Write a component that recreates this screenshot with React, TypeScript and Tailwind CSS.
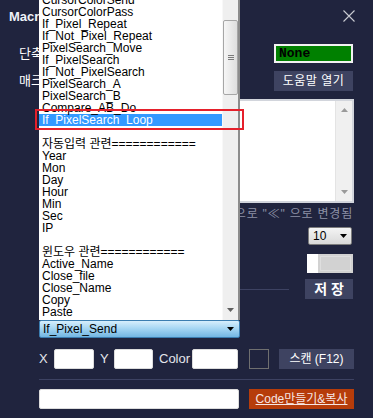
const rows: string[] = [
  'CursorColorSend',
  'CursorColorPass',
  'If_Pixel_Repeat',
  'If_Not_Pixel_Repeat',
  'PixelSearch_Move',
  'If_PixelSearch',
  'If_Not_PixelSearch',
  'PixelSearch_A',
  'PixelSearch_B',
  'Compare_AB_Do',
  'If_PixelSearch_Loop',
  '',
  '자동입력 관련============',
  'Year',
  'Mon',
  'Day',
  'Hour',
  'Min',
  'Sec',
  'IP',
  '',
  '윈도우 관련============',
  'Active_Name',
  'Close_file',
  'Close_Name',
  'Copy',
  'Paste',
]

const selected = 'If_PixelSearch_Loop'

function Tri({ up = false, color = '#000' }: { up?: boolean; color?: string }) {
  return (
    <svg width="7" height="4" viewBox="0 0 7 4">
      <path d={up ? 'M0 4L3.5 0L7 4Z' : 'M0 0L7 0L3.5 4Z'} fill={color} />
    </svg>
  )
}

function DropList() {
  return (
    <div className="absolute left-[39px] top-0 w-[201px] h-[320px] bg-white border-r-2 border-[#8c8c8c] flex overflow-hidden">
      <div className="flex-1 overflow-hidden">
        <div className="-mt-[6px]">
          {rows.map((r, i) => (
            <div
              key={i}
              className={
                'h-[12px] leading-[12px] text-[12px] pl-[3px] whitespace-nowrap ' +
                (r === selected ? 'bg-[#3399ff] text-white' : 'text-black')
              }
            >
              {r}
            </div>
          ))}
        </div>
      </div>
      <div className="w-[16px] bg-[#efefef] border-l border-[#f8f8f8] flex flex-col items-center">
        <div className="mt-[20px] w-[15px] h-[75px] rounded-[2px] border border-[#a6a6a6] bg-gradient-to-r from-[#f6f6f6] to-[#dedede] flex flex-col items-center justify-center gap-[1px]">
          <div className="w-[6px] h-px bg-[#7a7a7a]" />
          <div className="w-[6px] h-px bg-[#7a7a7a]" />
          <div className="w-[6px] h-px bg-[#7a7a7a]" />
        </div>
        <div className="mt-auto mb-[8px]">
          <Tri color="#606060" />
        </div>
      </div>
    </div>
  )
}

export default function App() {
  return (
    <div className="relative w-[373px] h-[418px] overflow-hidden bg-[#20243e] font-['Liberation_Sans','Noto_Sans_CJK_KR',sans-serif] text-white">
      <div className="flex flex-col">
        <div className="h-[44px] flex items-start justify-between">
          <div className="ml-[9px] mt-[10px] text-[13px] leading-[14px] font-bold text-[#eef1f8]">Macro 설정</div>
          <svg className="mt-[10px] mr-[18px]" width="12" height="12" viewBox="0 0 12 12">
            <path d="M0.5 0.5L11.5 11.5M11.5 0.5L0.5 11.5" stroke="#c9cbd2" strokeWidth="1.1" />
          </svg>
        </div>

        <div className="h-[19px] flex items-center justify-between pl-[19px] pr-[20px]">
          <span className="text-[13px] leading-[14px]">단축키</span>
          <div className="w-[79px] h-[19px] bg-[#008000] border-2 border-[#f2f2f2] flex items-center pl-[3px]">
            <span className="font-['Liberation_Mono',monospace] font-bold text-[13px] leading-[14px] text-black">None</span>
          </div>
        </div>

        <div className="mt-[8px] h-[20px] flex items-center justify-between pl-[19px] pr-[20px]">
          <span className="text-[13px] leading-[14px]">매크로 이름</span>
          <button className="w-[79px] h-[20px] bg-[#3e4361] text-[12px] text-white flex items-center justify-center tracking-[0.5px]">
            도움말 열기
          </button>
        </div>

        <div className="mt-[8px] ml-[39px] mr-[19px] h-[104px] bg-white border-2 border-[#d2d5dc] flex justify-end">
          <div className="w-[17px] bg-[#f0f0f0] border-l border-[#e4e4e4] flex flex-col items-center justify-between py-[7px]">
            <Tri up color="#9a9a9a" />
            <Tri color="#9a9a9a" />
          </div>
        </div>

        <div className="mt-[4px] pr-[20px] text-right text-[12px] leading-[14px] tracking-[0.8px] text-[#8d91a6] whitespace-nowrap">
          ※ 코드 안의 "&lt;" 는 자동 으로 "≪" 으로 변경됨
        </div>

        <div className="mt-[6px] self-end mr-[21px] w-[44px] h-[18px] rounded-[2px] border border-[#7c7c7c] bg-gradient-to-b from-[#f4f4f4] to-[#d9d9d9] flex items-center justify-between pl-[4px] pr-[4px]">
          <span className="text-[12px] leading-[12px] text-black">10</span>
          <Tri />
        </div>

        <div className="mt-[9px] self-end mr-[20px] w-[46px] h-[19px] flex">
          <div className="w-[11px] bg-white" />
          <div className="flex-1 bg-[#d2d2d2] p-[2px]">
            <div className="w-full h-full border border-[#dedede]" />
          </div>
        </div>

        <div className="mt-[6px] h-[20px] flex items-center pl-[39px] pr-[20px]">
          <div className="w-[250px] h-px bg-[#3d4262]" />
          <button className="ml-auto w-[48px] h-[20px] bg-[#3e4361] text-[14px] font-bold text-white flex items-center justify-center">
            저 장
          </button>
        </div>

        <div className="mt-[21px] ml-[39px] w-[201px] h-[18px] rounded-[2px] border border-[#3b7db0] bg-gradient-to-b from-[#d6eefc] via-[#a2d4f2] to-[#73b6e2] flex items-center justify-between pl-[3px] pr-[5px]">
          <span className="text-[12px] leading-[12px] text-black">If_Pixel_Send</span>
          <Tri />
        </div>

        <div className="mt-[11px] h-[20px] flex items-center pl-[39px] text-[13px] text-[#e4e6ec]">
          <span className="w-[15px]">X</span>
          <div className="w-[40px] h-[20px] bg-white rounded-[2px] border border-[#dcdcdc]" />
          <span className="ml-[6px] w-[14px]">Y</span>
          <div className="w-[39px] h-[20px] bg-white rounded-[2px] border border-[#dcdcdc]" />
          <span className="ml-[6px] w-[33px]">Color</span>
          <div className="w-[46px] h-[20px] bg-white rounded-[2px] border border-[#dcdcdc]" />
          <div className="ml-[11px] w-[20px] h-[20px] border border-[#6f6f6f]" />
          <button className="ml-[10px] w-[75px] h-[20px] bg-[#3e4361] text-[12px] text-white flex items-center justify-center">
            스캔 (F12)
          </button>
        </div>

        <div className="mt-[10px] ml-[39px] w-[315px] h-px bg-[#3d4262]" />

        <div className="mt-[9px] h-[20px] flex items-center pl-[39px]">
          <div className="w-[200px] h-[20px] bg-white rounded-[2px] border border-[#dcdcdc]" />
          <button className="ml-[10px] w-[105px] h-[20px] bg-[#b63c0a] text-[12px] text-[#f6e6e4] underline flex items-center justify-center">
            Code만들기&amp;복사
          </button>
        </div>
      </div>

      <DropList />
      <div className="absolute left-[35px] top-[109px] w-[209px] h-[21px] border-2 border-[#e5202b]" />
    </div>
  )
}
